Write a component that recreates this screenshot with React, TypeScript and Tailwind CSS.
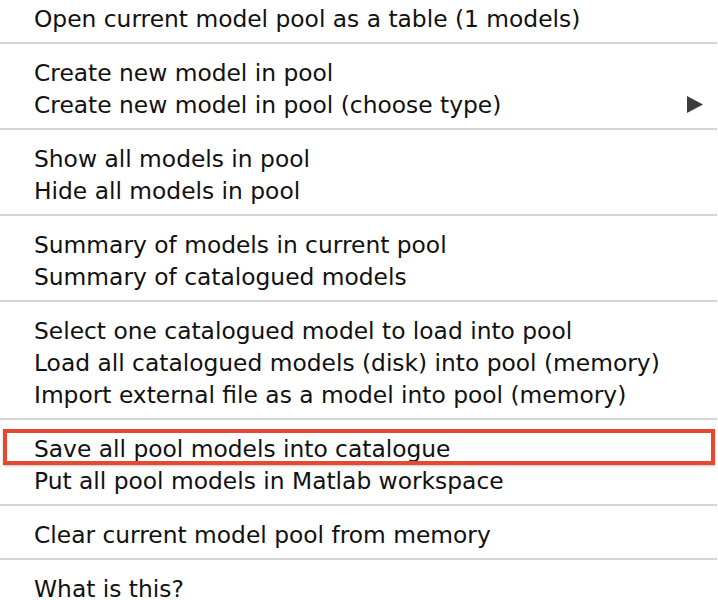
type Item = { label: string; submenu?: boolean; marked?: boolean };

const sections: Item[][] = [
  [{ label: "Open current model pool as a table (1 models)" }],
  [
    { label: "Create new model in pool" },
    { label: "Create new model in pool (choose type)", submenu: true },
  ],
  [{ label: "Show all models in pool" }, { label: "Hide all models in pool" }],
  [
    { label: "Summary of models in current pool" },
    { label: "Summary of catalogued models" },
  ],
  [
    { label: "Select one catalogued model to load into pool" },
    { label: "Load all catalogued models (disk) into pool (memory)" },
    { label: "Import external file as a model into pool (memory)" },
  ],
  [
    { label: "Save all pool models into catalogue", marked: true },
    { label: "Put all pool models in Matlab workspace" },
  ],
  [{ label: "Clear current model pool from memory" }],
  [{ label: "What is this?" }],
];

const MenuRow = ({ item }: { item: Item }) => (
  <div className="relative flex h-8 items-center justify-between pl-[34px] pr-[14px] leading-8">
    <span className="whitespace-nowrap">{item.label}</span>
    {item.submenu && (
      <svg width="16" height="17" viewBox="0 0 16 17" className="-mt-[1px] text-[#3c3c3c]">
        <path d="M0 0 L16 8.5 L0 17 Z" fill="currentColor" />
      </svg>
    )}
    {/* annotation box drawn over the row */}
    {item.marked && (
      <div className="pointer-events-none absolute -top-[4px] bottom-0 left-[3px] right-[2px] border-4 border-[#e5492f] shadow-[0_1px_2px_rgba(0,0,0,0.25)]" />
    )}
  </div>
);

export default function App() {
  return (
    <div className="h-[600px] w-[718px] overflow-hidden bg-white font-['DejaVu_Sans',sans-serif] text-[23.35px] text-[#111]">
      {sections.map((section, i) => (
        <div
          key={i}
          className={
            i === 0
              ? "mr-[1px] border-b-2 border-[#d5d5d5] pt-[3px] pb-[7px]"
              : i === sections.length - 1
                ? "pt-[13px] pb-[7px]"
                : "mr-[1px] border-b-2 border-[#d5d5d5] pt-[13px] pb-[7px]"
          }
        >
          {section.map((item) => (
            <MenuRow key={item.label} item={item} />
          ))}
        </div>
      ))}
    </div>
  );
}
